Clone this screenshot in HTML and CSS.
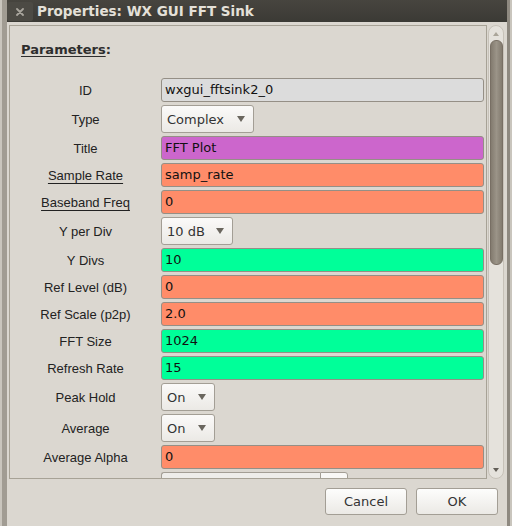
FILE: index.html
```html
<!DOCTYPE html>
<html lang="en">
<head>
    <meta charset="UTF-8">
    <meta name="viewport" content="width=device-width, initial-scale=1.0">
    <title>Properties: WX GUI FFT Sink</title>
    <link rel="stylesheet" href="styles.css">
</head>
<body>

    <div class="window">
        <!-- Title Bar -->
        <div class="titlebar">
            <div class="close-btn">
                <svg width="8" height="8" viewBox="0 0 8 8">
                    <path d="M1 1 L7 7 M7 1 L1 7" stroke="#a9a59d" stroke-width="1.8" stroke-linecap="round"/>
                </svg>
            </div>
            <div class="title">Properties: WX GUI FFT Sink</div>
        </div>

        <!-- Dialog Body -->
        <div class="dialog-body">
            <div class="scroll-area">
                <div class="frame">
                    <div class="params-title"><u>Parameters</u>:</div>

                    <div class="params">
                        <div class="label">ID</div>
                        <div class="entry entry-id">wxgui_fftsink2_0</div>

                        <div class="label">Type</div>
                        <div class="combo-cell"><div class="combo combo-type"><span>Complex</span><i class="arrow"></i></div></div>

                        <div class="label">Title</div>
                        <div class="entry entry-string">FFT Plot</div>

                        <div class="label"><u>Sample Rate</u></div>
                        <div class="entry entry-float">samp_rate</div>

                        <div class="label"><u>Baseband Freq</u></div>
                        <div class="entry entry-float">0</div>

                        <div class="label">Y per Div</div>
                        <div class="combo-cell"><div class="combo combo-ydiv"><span>10 dB</span><i class="arrow"></i></div></div>

                        <div class="label">Y Divs</div>
                        <div class="entry entry-int">10</div>

                        <div class="label">Ref Level (dB)</div>
                        <div class="entry entry-float">0</div>

                        <div class="label">Ref Scale (p2p)</div>
                        <div class="entry entry-float">2.0</div>

                        <div class="label">FFT Size</div>
                        <div class="entry entry-int">1024</div>

                        <div class="label">Refresh Rate</div>
                        <div class="entry entry-int">15</div>

                        <div class="label">Peak Hold</div>
                        <div class="combo-cell"><div class="combo combo-small"><span>On</span><i class="arrow"></i></div></div>

                        <div class="label">Average</div>
                        <div class="combo-cell"><div class="combo combo-small"><span>On</span><i class="arrow"></i></div></div>

                        <div class="label">Average Alpha</div>
                        <div class="entry entry-float">0</div>

                        <!-- next row is scrolled out of view, only its top edge shows -->
                        <div class="label"></div>
                        <div class="combo-cell">
                            <div class="combo-entry">
                                <div class="ce-field"></div>
                                <div class="ce-button"></div>
                            </div>
                        </div>
                    </div>
                </div>

                <div class="scrollbar">
                    <div class="sb-arrow sb-up"></div>
                    <div class="sb-thumb"></div>
                    <div class="sb-space"></div>
                    <div class="sb-arrow sb-down"></div>
                </div>
            </div>

            <!-- Buttons -->
            <div class="actions">
                <button class="btn">Cancel</button>
                <button class="btn">OK</button>
            </div>
        </div>
    </div>

</body>
</html>
```

FILE: styles.css
```css
/* General Styles */
body {
    margin: 0;
    background-color: #c9c5bd;
    font-family: 'DejaVu Sans', sans-serif;
    font-size: 13px;
    overflow: hidden;
}

.window {
    margin-left: 2px;
    width: 508px;
    height: 526px;
    box-sizing: border-box;
    border-left: 5px solid #a19c93;
    border-right: 3px solid #8e8980;
    background-color: #dbd7d0;
    display: flex;
    flex-direction: column;
}

/* Title Bar */
.titlebar {
    height: 22px;
    flex: none;
    display: flex;
    align-items: flex-start;
    background: linear-gradient(#47453f, #3b3a35);
}

.close-btn {
    width: 26px;
    height: 19px;
    margin-top: 2px;
    background-color: #4c4a44;
    border-radius: 2px;
    display: flex;
    align-items: center;
    justify-content: center;
}

.title {
    margin-left: 4px;
    line-height: 22px;
    font-size: 13.5px;
    font-weight: 700;
    color: #e4e0d8;
    white-space: nowrap;
}

/* Dialog Body */
.dialog-body {
    flex: 1;
    padding: 3px 0 0 2px;
}

.scroll-area {
    display: flex;
    height: 454px;
}

.frame {
    width: 478px;
    height: 454px;
    box-sizing: border-box;
    border: 1px solid #a7a296;
    overflow: hidden;
}

.params-title {
    margin: 16px 0 20px 11px;
    line-height: 16px;
    font-weight: 700;
    color: #2e2e2e;
}

.params-title u {
    text-underline-offset: 2px;
}

/* Parameter Rows */
.params {
    display: grid;
    grid-template-columns: 151px 323px;
    row-gap: 3px;
    align-items: center;
}

.label {
    text-align: center;
    font-family: 'Liberation Sans', sans-serif;
    font-size: 13px;
    color: #222;
    white-space: nowrap;
}

.label u {
    text-underline-offset: 3px;
}

.entry {
    height: 24px;
    box-sizing: border-box;
    border: 1px solid #958f86;
    border-radius: 3px;
    padding-left: 3px;
    line-height: 22px;
    color: #111;
    white-space: nowrap;
}

.entry-id { background-color: #dcdcdc; }
.entry-string { background-color: #cc66cc; }
.entry-float { background-color: #ff8c69; }
.entry-int { background-color: #00ff99; }

.combo-cell {
    display: flex;
}

.combo {
    height: 28px;
    box-sizing: border-box;
    border: 1px solid #a39e95;
    border-radius: 3px;
    background: linear-gradient(#fbfaf9, #ebe9e5);
    display: flex;
    align-items: center;
    justify-content: space-between;
    padding: 0 8px 0 5px;
    color: #333;
    white-space: nowrap;
}

.combo-type { width: 93px; }
.combo-ydiv { width: 72px; }
.combo-small { width: 54px; }

.arrow {
    width: 0;
    height: 0;
    border-left: 4px solid transparent;
    border-right: 4px solid transparent;
    border-top: 6px solid #6a665e;
}

.combo-entry {
    display: flex;
    height: 28px;
}

.ce-field {
    width: 158px;
    border: 1px solid #a39e95;
    border-right: none;
    border-radius: 3px 0 0 3px;
    background-color: #eeedea;
}

.ce-button {
    width: 26px;
    border: 1px solid #a39e95;
    border-radius: 0 3px 3px 0;
    background-color: #f9f8f6;
}

/* Scrollbar */
.scrollbar {
    margin-left: 1px;
    width: 16px;
    height: 454px;
    box-sizing: border-box;
    border: 1px solid #c7c2b9;
    border-radius: 8px;
    background-color: #e5e2dc;
    display: flex;
    flex-direction: column;
    align-items: center;
}

.sb-arrow {
    flex: none;
    width: 0;
    height: 0;
    border-left: 3px solid transparent;
    border-right: 3px solid transparent;
}

.sb-up {
    margin-top: 6px;
    border-bottom: 4px solid #aaa599;
}

.sb-thumb {
    flex: none;
    margin-top: 4px;
    width: 13px;
    height: 225px;
    box-sizing: border-box;
    border: 1px solid #786f64;
    border-radius: 6px;
    background: linear-gradient(to right, #837b6f, #9b9488 50%, #837b6f);
}

.sb-space {
    flex: 1;
}

.sb-down {
    margin-bottom: 6px;
    border-top: 4px solid #625e57;
}

/* Buttons */
.actions {
    display: flex;
    justify-content: flex-end;
    gap: 9px;
    padding: 9px 9px 0 0;
}

.btn {
    width: 82px;
    height: 27px;
    border: 1px solid #a39e95;
    border-radius: 3px;
    background: linear-gradient(#fdfdfc, #ebe9e5);
    font-family: 'DejaVu Sans', sans-serif;
    font-size: 13px;
    color: #333;
    padding: 0;
}
```
